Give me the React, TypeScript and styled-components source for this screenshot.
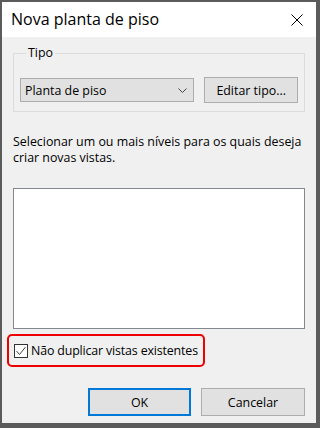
import React from "react";
import styled, { createGlobalStyle } from "styled-components";

const Global = createGlobalStyle`
  html, body { margin: 0; padding: 0; background: #5b5b5b; }
  * { box-sizing: border-box; }
`;

const font = `"Open Sans", "Noto Sans", sans-serif`;

const Frame = styled.div`
  width: 319px;
  height: 428px;
  padding: 2px 3px 5px 2px;
  background: #5b5b5b;
`;

const Dialog = styled.div`
  height: 100%;
  display: flex;
  flex-direction: column;
  font-family: ${font};
  color: #000;
`;

const TitleBar = styled.div`
  height: 35px;
  flex: none;
  background: #fff;
  display: flex;
  align-items: center;
  justify-content: space-between;
  padding: 0 13px 0 9px;
`;

const Title = styled.div`
  font-size: 16px;
  line-height: 20px;
  margin-top: -2px;
`;

const Body = styled.div`
  flex: 1;
  background: #f0f0f0;
  padding: 0 11px 7px 11px;
  display: flex;
  flex-direction: column;
  font-size: 12.4px;
`;

const GroupBox = styled.fieldset`
  margin: 8px 0 0 0;
  border: 1px solid #dcdcdc;
  padding: 16px 6px 8px 6px;
  min-width: 0;
`;

const Legend = styled.legend`
  padding: 0 2px;
  margin-left: 6px;
  line-height: 16px;
`;

const Row = styled.div`
  display: flex;
  align-items: center;
  gap: 10px;
`;

const Select = styled.div`
  width: 175px;
  height: 24px;
  background: #e1e1e1;
  border: 1px solid #adadad;
  display: flex;
  align-items: center;
  justify-content: space-between;
  padding: 0 6px 0 4px;
`;

const Button = styled.div<{ $primary?: boolean; $w: number; $h: number }>`
  width: ${(p) => p.$w}px;
  height: ${(p) => p.$h}px;
  background: #e1e1e1;
  border: ${(p) => (p.$primary ? "2px solid #0078d7" : "1px solid #adadad")};
  display: flex;
  align-items: center;
  justify-content: center;
`;

const Description = styled.p`
  margin: 22px 0 0 0;
  line-height: 16px;
`;

const ListBox = styled.div`
  margin-top: 22px;
  height: 141px;
  background: #fff;
  border: 1px solid #828790;
  flex: none;
`;

const Highlight = styled.div`
  margin: 5px 0 0 -6px;
  width: 198px;
  height: 33px;
  border: 2px solid #ee0000;
  border-radius: 5px;
  display: flex;
  align-items: center;
  padding: 0 5px;
  gap: 3px;
`;

const CheckBox = styled.div`
  width: 14px;
  height: 14px;
  border: 1px solid #333;
  background: #fff;
  display: flex;
  align-items: center;
  justify-content: center;
  flex: none;
`;

const CheckLabel = styled.span`
  white-space: nowrap;
  letter-spacing: -0.15px;
`;

const Footer = styled.div`
  margin-top: auto;
  display: flex;
  justify-content: flex-end;
  gap: 10px;
`;

export default function App() {
  return (
    <Frame>
      <Global />
      <Dialog>
        <TitleBar>
          <Title>Nova planta de piso</Title>
          <svg width="12" height="12" viewBox="0 0 12 12">
            <path d="M0.5 0.5 L11.5 11.5 M11.5 0.5 L0.5 11.5" stroke="#000" strokeWidth="1" fill="none" />
          </svg>
        </TitleBar>
        <Body>
          <GroupBox>
            <Legend>Tipo</Legend>
            <Row>
              <Select>
                <span>Planta de piso</span>
                <svg width="9" height="5" viewBox="0 0 9 5">
                  <path d="M0.5 0.5 L4.5 4.5 L8.5 0.5" stroke="#444" strokeWidth="1" fill="none" />
                </svg>
              </Select>
              <Button $w={94} $h={26}>Editar tipo...</Button>
            </Row>
          </GroupBox>
          <Description>
            Selecionar um ou mais níveis para os quais deseja criar novas vistas.
          </Description>
          <ListBox />
          <Highlight>
            <CheckBox>
              <svg width="12" height="12" viewBox="0 0 12 12">
                <path d="M1.5 6 L4.5 9.5 L10.5 2" stroke="#444" strokeWidth="1" fill="none" />
              </svg>
            </CheckBox>
            <CheckLabel>Não duplicar vistas existentes</CheckLabel>
          </Highlight>
          <Footer>
            <Button $primary $w={103} $h={28}>OK</Button>
            <Button $w={104} $h={28}>Cancelar</Button>
          </Footer>
        </Body>
      </Dialog>
    </Frame>
  );
}
